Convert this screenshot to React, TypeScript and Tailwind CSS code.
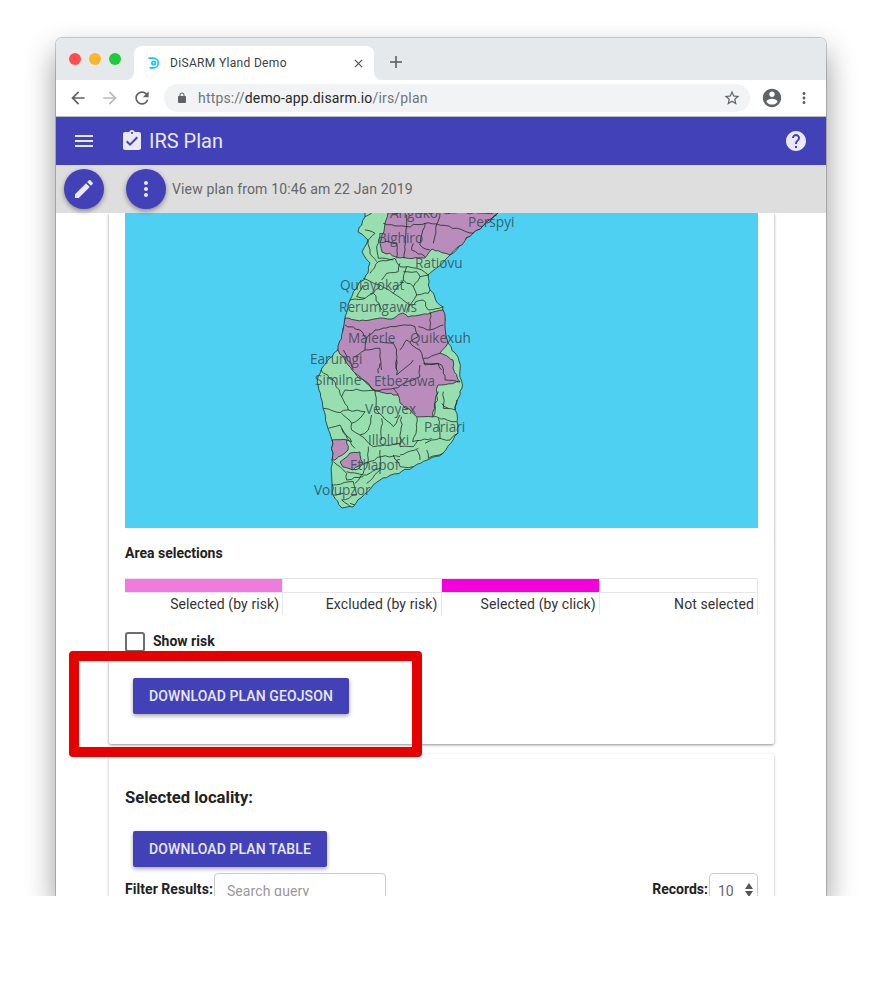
import React from "react";

const paths = {
  menu: "M3 18h18v-2H3v2zm0-5h18v-2H3v2zm0-7v2h18V6H3z",
  assignment:
    "M19 3h-4.18C14.4 1.84 13.3 1 12 1c-1.3 0-2.4.84-2.82 2H5c-1.1 0-2 .9-2 2v14c0 1.1.9 2 2 2h14c1.1 0 2-.9 2-2V5c0-1.1-.9-2-2-2zm-7 0c.55 0 1 .45 1 1s-.45 1-1 1-1-.45-1-1 .45-1 1-1zm-2 14l-4-4 1.41-1.41L10 14.17l6.59-6.59L18 9l-8 8z",
  help: "M12 2C6.48 2 2 6.48 2 12s4.48 10 10 10 10-4.48 10-10S17.52 2 12 2zm1 17h-2v-2h2v2zm2.07-7.75l-.9.92C13.45 12.9 13 13.5 13 15h-2v-.5c0-1.1.45-2.1 1.17-2.83l1.24-1.26c.37-.36.59-.86.59-1.41 0-1.1-.9-2-2-2s-2 .9-2 2H8c0-2.21 1.79-4 4-4s4 1.79 4 4c0 .88-.36 1.68-.93 2.25z",
  edit: "M3 17.25V21h3.75L17.81 9.94l-3.75-3.75L3 17.25zM20.71 7.04c.39-.39.39-1.02 0-1.41l-2.34-2.34c-.39-.39-1.02-.39-1.41 0l-1.83 1.83 3.75 3.75 1.83-1.83z",
  more: "M12 8c1.1 0 2-.9 2-2s-.9-2-2-2-2 .9-2 2 .9 2 2 2zm0 2c-1.1 0-2 .9-2 2s.9 2 2 2 2-.9 2-2-.9-2-2-2zm0 6c-1.1 0-2 .9-2 2s.9 2 2 2 2-.9 2-2-.9-2-2-2z",
  account:
    "M12 2C6.48 2 2 6.48 2 12s4.48 10 10 10 10-4.48 10-10S17.52 2 12 2zm0 3c1.66 0 3 1.34 3 3s-1.34 3-3 3-3-1.34-3-3 1.34-3 3-3zm0 14.2c-2.5 0-4.71-1.28-6-3.22.03-1.99 4-3.08 6-3.08 1.99 0 5.97 1.09 6 3.08-1.29 1.94-3.5 3.22-6 3.22z",
  refresh:
    "M17.65 6.35C16.2 4.9 14.21 4 12 4c-4.42 0-7.99 3.58-7.99 8s3.57 8 7.99 8c3.73 0 6.84-2.55 7.73-6h-2.08c-.82 2.33-3.04 4-5.65 4-3.31 0-6-2.69-6-6s2.69-6 6-6c1.66 0 3.14.69 4.22 1.78L13 11h7V4l-2.35 2.35z",
  star: "M22 9.24l-7.19-.62L12 2 9.19 8.63 2 9.24l5.46 4.73L5.82 21 12 17.27 18.18 21l-1.63-7.03L22 9.24zM12 15.4l-3.76 2.27 1-4.28-3.32-2.88 4.38-.38L12 6.1l1.71 4.04 4.38.38-3.32 2.88 1 4.28L12 15.4z",
  back: "M20 11H7.83l5.59-5.59L12 4l-8 8 8 8 1.41-1.41L7.83 13H20v-2z",
  forward: "M12 4l-1.41 1.41L16.17 11H4v2h12.17l-5.58 5.59L12 20l8-8z",
  lock: "M18 8h-1V6c0-2.76-2.24-5-5-5S7 3.24 7 6v2H6c-1.1 0-2 .9-2 2v10c0 1.1.9 2 2 2h12c1.1 0 2-.9 2-2V10c0-1.1-.9-2-2-2zM9 6c0-1.66 1.34-3 3-3s3 1.34 3 3v2H9V6z",
};

function Icon({ d, className }: { d: string; className?: string }) {
  return (
    <svg viewBox="0 0 24 24" className={className} fill="currentColor">
      <path d={d} />
    </svg>
  );
}

const legend = [
  { label: "Selected (by risk)", color: "bg-[#ef7bdd]" },
  { label: "Excluded (by risk)", color: "bg-white" },
  { label: "Selected (by click)", color: "bg-[#f500dc]" },
  { label: "Not selected", color: "bg-white" },
];

// map labels, x and y are the left edge and middle of the text inside the map
const mapLabels = [
  { t: "Anguko", x: 265, y: 0 },
  { t: "Perspyi", x: 343, y: 9 },
  { t: "Bighiro", x: 253, y: 25 },
  { t: "Ratiovu", x: 290, y: 50 },
  { t: "Quiayokat", x: 215, y: 72 },
  { t: "Rerumgawis", x: 214, y: 94 },
  { t: "Maierle", x: 223, y: 125 },
  { t: "Quikexuh", x: 285, y: 125 },
  { t: "Earumgi", x: 185, y: 146 },
  { t: "Similne", x: 190, y: 167 },
  { t: "Etbezowa", x: 249, y: 168 },
  { t: "Veroyex", x: 240, y: 196 },
  { t: "Pariari", x: 299, y: 214 },
  { t: "Illoluxi", x: 243, y: 227 },
  { t: "Ethapof", x: 225, y: 252 },
  { t: "Volupzor", x: 189, y: 277 },
];

const island =
  "M365 213 L365 217 L358 232 L368 240 L362 252 L370 263 L368 273 L358 285 L350 300 L345 317 L345 325 L338 350 L322 368 L318 377 L319 390 L323 408 L327 425 L332 440 L332 460 L333 495 L342 508 L353 507 L362 497 L380 480 L413 467 L443 453 L458 433 L457 422 L455 407 L462 388 L460 370 L458 357 L448 343 L443 325 L445 320 L443 307 L435 298 L430 290 L428 275 L438 267 L450 255 L467 238 L473 233 L498 213";

const purple = [
  "M388 213 L498 213 L473 233 L450 255 L432 249 L425 258 L400 258 L382 252 L380 243 L385 223 L388 213",
  "M345 318 L355 320 L370 320 L380 318 L392 319 L403 313 L408 317 L420 315 L433 312 L443 310 L445 323 L448 343 L440 353 L453 360 L453 368 L460 382 L438 385 L433 417 L417 417 L400 403 L398 395 L375 391 L355 373 L352 370 L338 350 L345 318",
  "M332 440 L347 440 L348 450 L345 453 L335 460 L332 460 L332 440",
  "M350 453 L360 452 L363 463 L353 470 L343 467 L340 462 L350 453",
];

const upperLines = [
  "M250 40 L320 50 L320 15",
  "M320 50 L312 145",
  "M255 95 L290 100 L290 145",
  "M340 100 L335 120 L375 140",
  "M375 40 L360 105 L390 120",
  "M320 50 L375 40 L410 42 L400 100",
  "M410 42 L520 70",
  "M420 10 L410 42",
  "M560 40 L575 25 L590 15",
  "M195 60 L225 70 L205 90 L210 130 L230 155",
  "M230 110 L235 145 L280 150",
  "M215 10 L195 20",
  "M240 80 L230 110",
  "M210 190 L235 155 L285 145 L300 170 L350 175 L385 195",
  "M300 160 L295 185 L260 190 L245 210",
  "M320 170 L310 210 L340 230 L360 200 L385 195",
  "M310 185 L350 185 L360 200",
  "M190 225 L170 260 L195 265 L220 250",
  "M190 205 L240 225 L220 250 L245 300",
  "M240 225 L280 250 L330 285",
  "M280 250 L310 210",
  "M340 230 L350 255 L385 250 L390 240",
  "M350 255 L330 285 L370 270 L385 300 L430 290",
  "M330 285 L320 308",
  "M150 270 L195 265",
  "M135 345 L180 360 L200 385 L225 360 L285 350 L310 345 L345 350 L355 380 L330 395",
  "M390 360 L430 345",
  "M390 305 L390 360 L355 350",
  "M200 385 L195 420 L240 415 L245 480",
  "M240 395 L280 400 L290 420 L290 480",
  "M300 420 L320 390 L335 405 L360 420",
  "M360 420 L375 465 L415 460 L425 480",
  "M370 445 L420 430",
  "M160 480 L130 420",
  "M195 420 L165 440",
];

const lowerLines = [
  "M290 0 L290 45 L320 20 L340 0",
  "M370 10 L425 15 L435 60 L475 65",
  "M235 40 L240 10",
  "M360 15 L360 50 L280 85 L295 105",
  "M225 92 L280 85",
  "M165 40 L225 92",
  "M62 30 L100 60 L125 110 L135 90 L225 90",
  "M125 110 L145 150 L195 155",
  "M70 145 L120 158 L145 150",
  "M225 92 L230 150 L280 200 L300 165",
  "M195 155 L180 175 L155 190 L125 160",
  "M215 165 L205 210 L180 225 L155 210 L155 190",
  "M85 205 L120 195 L155 245 L140 240",
  "M125 205 L165 265",
  "M245 175 L245 240",
  "M305 170 L300 260 L340 260 L355 240",
  "M350 172 L350 205 L338 245 L395 235",
  "M400 170 L470 185",
  "M415 95 L400 170",
  "M430 95 L430 145 L465 150 L470 120",
  "M425 130 L445 145",
  "M415 175 L420 235 L450 240 L475 220",
  "M375 250 L395 240 L420 235",
  "M180 225 L220 260 L300 250",
  "M205 260 L205 300 L190 340 L165 370",
  "M240 270 L240 330 L200 370",
  "M280 285 L300 320 L340 320",
  "M350 270 L360 300",
  "M380 270 L385 295 L430 280",
  "M300 285 L355 265",
  "M165 330 L195 310 L245 290 L300 290",
  "M140 335 L200 345 L240 325",
  "M100 305 L120 320 L140 340 L140 360 L190 350",
  "M100 375 L160 365 L170 405 L125 420",
  "M125 420 L150 440",
  "M100 405 L130 400",
  "M150 430 L165 435",
];

// breaks straight segments up so the borders look hand surveyed instead of ruled
function rough(d: string, amp: number, step: number) {
  const pts = d
    .replace(/[ML]/g, "")
    .trim()
    .split(/\s+/)
    .map(Number);
  let out = `M${pts[0]} ${pts[1]}`;
  for (let i = 2; i < pts.length; i += 2) {
    const [x0, y0, x1, y1] = [pts[i - 2], pts[i - 1], pts[i], pts[i + 1]];
    const n = Math.max(1, Math.round(Math.hypot(x1 - x0, y1 - y0) / step));
    // sorted ends, so a border shared by two shapes wobbles the same way in both
    const flip = x0 > x1 || (x0 === x1 && y0 > y1);
    const [ax, ay, bx, by] = flip ? [x1, y1, x0, y0] : [x0, y0, x1, y1];
    const seg: string[] = [];
    for (let k = 1; k < n; k++) {
      const t = k / n;
      const x = ax + (bx - ax) * t;
      const y = ay + (by - ay) * t;
      const jx = Math.sin(x * 12.9898 + y * 78.233) * 43758.5453;
      const jy = Math.sin(x * 39.346 + y * 11.135) * 24634.6345;
      seg.push(`L${(x + (jx - Math.floor(jx) - 0.5) * amp).toFixed(1)} ${(y + (jy - Math.floor(jy) - 0.5) * amp).toFixed(1)}`);
    }
    if (flip) seg.reverse();
    out += seg.join("") + `L${x1} ${y1}`;
  }
  return out;
}

function IslandMap() {
  return (
    <div className="relative h-[315px] w-[633px] overflow-hidden bg-[#4dd0f1]">
      <svg viewBox="125 213 633 315" className="h-[315px] w-[633px]">
        <path d={rough(island, 2.2, 4)} fill="#98dfb0" stroke="#16241c" strokeWidth="0.75" />
        <g fill="#b98cbb" stroke="#16241c" strokeWidth="0.75" strokeLinejoin="round">
          {purple.map((d) => (
            <path key={d} d={rough(d, 2.2, 4)} />
          ))}
        </g>
        <g transform="translate(300 210) scale(0.3333)" fill="none" stroke="#16241c" strokeWidth="2.25" strokeLinejoin="round">
          {upperLines.map((d) => (
            <path key={d} d={rough(d, 6, 12)} />
          ))}
        </g>
        <g transform="translate(300 360) scale(0.3333)" fill="none" stroke="#16241c" strokeWidth="2.25" strokeLinejoin="round">
          {lowerLines.map((d) => (
            <path key={d} d={rough(d, 6, 12)} />
          ))}
        </g>
      </svg>
      {mapLabels.map((l) => (
        <span
          key={l.t}
          className="absolute -translate-y-1/2 whitespace-nowrap text-[13.6px] leading-[18px] text-[#33424e]/80 [font-family:'Open_Sans',sans-serif]"
          style={{ left: l.x, top: l.y }}
        >
          {l.t}
        </span>
      ))}
    </div>
  );
}

function TrafficLight({ className }: { className: string }) {
  return <div className={`h-3 w-3 rounded-full ${className}`} />;
}

function Fab({ d }: { d: string }) {
  return (
    <div className="flex h-10 w-10 items-center justify-center rounded-full bg-[#4341b8] text-[#e8e8f6] shadow-[0_2px_5px_rgba(0,0,0,0.4)]">
      <Icon d={d} className="h-6 w-6" />
    </div>
  );
}

function RaisedButton({ children }: { children: React.ReactNode }) {
  return (
    <button className="h-9 rounded-[2px] bg-[#4341b8] px-4 text-[14px] font-medium uppercase tracking-[0.1px] text-[#e8e8f6] shadow-[0_2px_4px_rgba(0,0,0,0.35)]">
      {children}
    </button>
  );
}

export default function App() {
  return (
    <div className="relative h-[989px] w-[882px] overflow-hidden bg-white [font-family:Roboto,sans-serif]">
      <div className="h-[896px] w-[882px] overflow-hidden pl-[56px] pt-[38px]">
        <div className="flex h-[858px] w-[770px] flex-col rounded-t-[6px] bg-white shadow-[0_0_0_1px_rgba(0,0,0,0.18),0_14px_30px_rgba(0,0,0,0.42)]">
          {/* tab strip */}
          <div className="flex h-[42px] shrink-0 items-end rounded-t-[6px] bg-[#e6e9ec]">
            <div className="mb-[15px] ml-[13px] flex gap-2">
              <TrafficLight className="bg-[#ff4f4a]" />
              <TrafficLight className="bg-[#fdb52d]" />
              <TrafficLight className="bg-[#1fcb3a]" />
            </div>
            <div className="relative ml-[13px] flex h-[34px] w-[240px] items-center rounded-t-[8px] bg-white pl-[14px] pr-[11px]">
              <svg viewBox="0 0 8 8" className="absolute -left-2 bottom-0 h-2 w-2">
                <path d="M8 0 V8 H0 A8 8 0 0 0 8 0Z" fill="#fff" />
              </svg>
              <svg viewBox="0 0 8 8" className="absolute -right-2 bottom-0 h-2 w-2">
                <path d="M0 0 V8 H8 A8 8 0 0 1 0 0Z" fill="#fff" />
              </svg>
              <svg viewBox="0 0 12 12" className="h-3 w-3" fill="none" stroke="#12c8f2" strokeWidth="1.7">
                <path d="M0.5 1.2 H5.5 A4.8 4.8 0 0 1 5.5 10.8 H1.5" />
                <circle cx="5.6" cy="6" r="1.7" />
              </svg>
              <span className="ml-[10px] text-[12px] tracking-[0.33px] text-[#3c4043]">DiSARM Yland Demo</span>
              <svg viewBox="0 0 10 10" className="ml-auto h-[9px] w-[9px]" stroke="#54585c" strokeWidth="1.4">
                <path d="M1 1 L9 9 M9 1 L1 9" />
              </svg>
            </div>
            <svg viewBox="0 0 12 12" className="mb-[12px] ml-4 h-3 w-3" stroke="#54585c" strokeWidth="1.5">
              <path d="M6 0 V12 M0 6 H12" />
            </svg>
          </div>
          {/* toolbar */}
          <div className="flex h-[37px] shrink-0 items-center border-b border-[#b8babc] bg-white pl-[12px] pr-[12px]">
            <Icon d={paths.back} className="h-5 w-5 text-[#5f6368]" />
            <Icon d={paths.forward} className="ml-3 h-5 w-5 text-[#b9bbbe]" />
            <Icon d={paths.refresh} className="ml-3 h-5 w-5 text-[#5f6368]" />
            <div className="ml-[12px] flex h-7 w-[586px] items-center rounded-full bg-[#f1f3f4] pl-3 pr-[9px]">
              <Icon d={paths.lock} className="h-3 w-3 text-[#5f6368]" />
              <span className="ml-[10px] text-[14px] tracking-[0.17px] text-[#72767a]">
                https://<span className="text-[#26282a]">demo-app.disarm.io</span>/irs/plan
              </span>
              <Icon d={paths.star} className="ml-auto h-[18px] w-[18px] text-[#5f6368]" />
            </div>
            <Icon d={paths.account} className="ml-[11px] h-[22px] w-[22px] text-[#5f6368]" />
            <Icon d={paths.more} className="ml-[12px] h-[18px] w-[18px] text-[#5f6368]" />
          </div>
          {/* app bar */}
          <div className="flex h-[48px] shrink-0 items-center bg-[#4341b8] pl-4 pr-[18px] text-[#e8e8f6]">
            <Icon d={paths.menu} className="h-6 w-6" />
            <Icon d={paths.assignment} className="ml-[24px] h-[24px] w-[24px]" />
            <span className="ml-[5px] text-[20px]">IRS Plan</span>
            <Icon d={paths.help} className="ml-auto h-6 w-6" />
          </div>
          {/* sub bar */}
          <div className="relative z-10 flex h-[48px] shrink-0 items-center bg-[#dedede] pl-2">
            <Fab d={paths.edit} />
            <div className="ml-[22px]">
              <Fab d={paths.more} />
            </div>
            <span className="ml-[6px] text-[14px] tracking-[0.14px] text-[#666]">View plan from 10:46 am 22 Jan 2019</span>
          </div>
          {/* scrolled content */}
          <div className="flex min-h-0 flex-1 flex-col overflow-hidden bg-white pl-[53px] pr-[52px]">
            <div className="flex h-[531px] shrink-0 flex-col rounded-b-[2px] bg-white px-4 shadow-[0_1px_3px_rgba(0,0,0,0.45)]">
              <IslandMap />
              <div className="mt-[17px] text-[14px] font-bold leading-[16px] text-[#222]">Area selections</div>
              <div className="mt-[17px] grid grid-cols-4">
                {legend.map((item) => (
                  <div key={item.label} className="border-r border-[#e6e6e6]">
                    <div className={`h-[15px] border-y border-[#e6e6e6] ${item.color}`} />
                    <div className="pr-[3px] text-right text-[14px] leading-[22px] tracking-[0.1px] text-[#333]">{item.label}</div>
                  </div>
                ))}
              </div>
              <div className="mt-4 flex items-center">
                <div className="h-5 w-5 rounded-[3px] border-2 border-[#6e6e6e]" />
                <span className="ml-2 text-[14px] font-bold text-[#222]">Show risk</span>
              </div>
              <div className="mt-[26px] pl-2">
                <RaisedButton>Download plan geojson</RaisedButton>
              </div>
            </div>
            <div className="mt-[10px] flex-1 rounded-t-[2px] bg-white px-4 shadow-[0_1px_3px_rgba(0,0,0,0.3)]">
              <div className="mt-[34px] text-[16.6px] font-bold leading-5 text-[#222]">Selected locality:</div>
              <div className="mt-[23px] pl-2">
                <RaisedButton>Download plan table</RaisedButton>
              </div>
              <div className="mt-[6px] flex items-start justify-between">
                <div className="flex items-start">
                  <span className="mt-[6px] text-[14px] font-bold tracking-[0.05px] text-[#222]">Filter Results:</span>
                  <div className="ml-px h-9 w-[172px] rounded-[4px] border border-[#ccc] pl-3 pt-[7px] text-[14px] tracking-[0.1px] text-[#999]">
                    Search query
                  </div>
                </div>
                <div className="flex items-start">
                  <span className="mt-[6px] text-[14px] font-bold text-[#222]">Records:</span>
                  <div className="relative ml-px h-9 w-[49px] rounded-[4px] border border-[#ccc] pl-2 pt-[7px] text-[14px] text-[#666]">
                    10
                    <svg viewBox="0 0 8 14" className="absolute right-[4px] top-[9px] h-[14px] w-2" fill="#555">
                      <path d="M4 0 L8 6 H0 Z M0 8 H8 L4 14 Z" />
                    </svg>
                  </div>
                </div>
              </div>
            </div>
          </div>
        </div>
      </div>
      {/* red annotation */}
      <div className="absolute left-[69px] top-[651px] h-[106px] w-[353px] rounded-[4px] border-[10px] border-[#e60000]" />
    </div>
  );
}
